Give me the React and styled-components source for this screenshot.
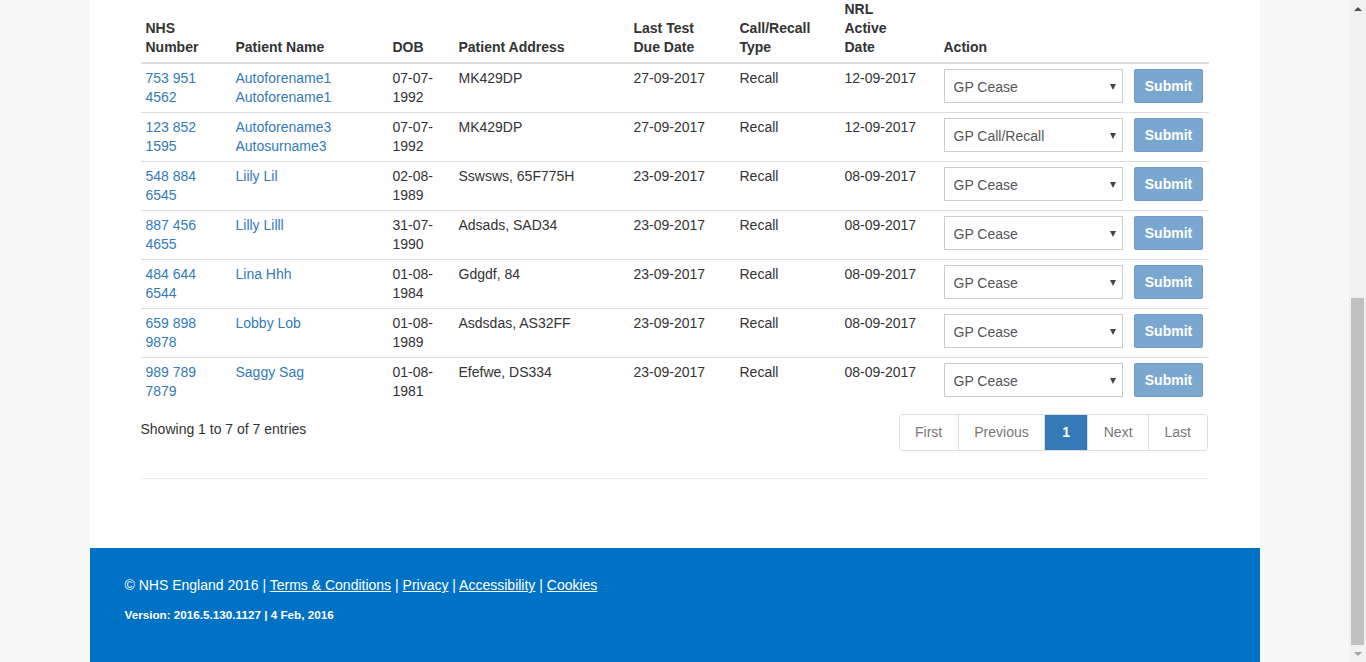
import React from "react";
import styled, { createGlobalStyle } from "styled-components";

const GlobalStyle = createGlobalStyle`
  html, body {
    margin: 0;
    padding: 0;
    overflow: hidden;
  }
  body {
    background: #f7f7f7;
    font-family: "Liberation Sans", Arial, sans-serif;
    font-size: 14px;
    color: #333;
  }
`;

const Shell = styled.div`
  display: flex;
  height: 662px;
  overflow: hidden;
`;

const Viewport = styled.div`
  flex: 1;
  overflow: hidden;
`;

const Container = styled.div`
  width: 1170px;
  margin: 0 auto;
  background: #fff;
`;

const Main = styled.div`
  padding: 0 51px;
  height: 548px;
  box-sizing: border-box;
`;

const Table = styled.table`
  width: 1068px;
  border-collapse: collapse;
  table-layout: fixed;
`;

const Th = styled.th`
  text-align: left;
  vertical-align: bottom;
  font-weight: bold;
  line-height: 19px;
  padding: 0 5px 5px;
  border-bottom: 2px solid #ddd;
`;

const Td = styled.td`
  vertical-align: top;
  line-height: 19px;
  padding: 5px;
  border-top: 1px solid #ddd;
  color: ${(p) => (p.$link ? "#337ab7" : "#333")};
`;

const ActionCell = styled.div`
  display: flex;
  gap: 11px;
`;

const SelectWrap = styled.div`
  position: relative;
  width: 179px;
  height: 34px;
`;

const Select = styled.select`
  appearance: none;
  width: 100%;
  height: 34px;
  box-sizing: border-box;
  border: 1px solid #ccc;
  border-radius: 0;
  background: #fff;
  padding: 0 9px;
  font-family: "Liberation Sans", Arial, sans-serif;
  font-size: 14px;
  color: #555;
  line-height: 34px;
`;

const Caret = styled.span`
  position: absolute;
  right: 7px;
  top: 15px;
  width: 0;
  height: 0;
  border-left: 3.5px solid transparent;
  border-right: 3.5px solid transparent;
  border-top: 6px solid #444;
  pointer-events: none;
`;

const SubmitButton = styled.button`
  width: 69px;
  height: 34px;
  border: 1px solid #6f9dc8;
  border-radius: 2px;
  background: #7aa7d0;
  color: #fff;
  font-family: "Liberation Sans", Arial, sans-serif;
  font-weight: bold;
  font-size: 14px;
  padding: 0 0 0 1px;
  cursor: not-allowed;
`;

const InfoRow = styled.div`
  display: flex;
  justify-content: space-between;
  align-items: flex-start;
  margin-top: 8px;
  padding-bottom: 27px;
  border-bottom: 1px solid #eee;
`;

const Info = styled.div`
  padding-top: 5px;
  line-height: 20px;
`;

const Pagination = styled.ul`
  display: flex;
  list-style: none;
  margin: 0 1px 0 0;
  padding: 0;
  border: 1px solid #ddd;
  border-radius: 4px;
  overflow: hidden;
`;

const PageItem = styled.li`
  padding: 8px ${(p) => (p.$active ? "15px" : "15.5px")};
  line-height: 19px;
  min-width: ${(p) => (p.$active ? "12px" : "auto")};
  text-align: center;
  color: ${(p) => (p.$active ? "#fff" : "#777")};
  background: ${(p) => (p.$active ? "#337ab7" : "#fff")};
  font-weight: ${(p) => (p.$active ? "bold" : "normal")};
  & + & {
    border-left: 1px solid #ddd;
  }
`;

const Footer = styled.footer`
  background: #0072c6;
  color: #fff;
  padding: 27px 35px 40px;
  height: 114px;
  box-sizing: border-box;
`;

const FooterLinks = styled.div`
  font-size: 14px;
  line-height: 20px;
`;

const FooterLink = styled.a`
  color: #fff;
  text-decoration: underline;
`;

const Version = styled.div`
  margin-top: 10px;
  font-size: 11.7px;
  font-weight: bold;
  line-height: 20px;
`;

const Scrollbar = styled.div`
  width: 17px;
  background: #f1f1f1;
  display: flex;
  flex-direction: column;
`;

const ArrowBox = styled.div`
  height: 17px;
  display: flex;
  align-items: center;
  justify-content: center;
`;

const Arrow = styled.span`
  width: 0;
  height: 0;
  border-left: 4px solid transparent;
  border-right: 4px solid transparent;
  ${(p) =>
    p.$up ? "border-bottom: 4px solid #505050;" : "border-top: 4px solid #a3a3a3;"}
`;

const Track = styled.div`
  flex: 1;
  display: flex;
  flex-direction: column;
  justify-content: flex-end;
  align-items: center;
`;

const Thumb = styled.div`
  width: 13px;
  height: 347px;
  background: #c1c1c1;
`;

const rows = [
  ["753 951 4562", "Autoforename1 Autoforename1", "07-07-1992", "MK429DP", "27-09-2017", "12-09-2017", "GP Cease"],
  ["123 852 1595", "Autoforename3 Autosurname3", "07-07-1992", "MK429DP", "27-09-2017", "12-09-2017", "GP Call/Recall"],
  ["548 884 6545", "Liily Lil", "02-08-1989", "Sswsws, 65F775H", "23-09-2017", "08-09-2017", "GP Cease"],
  ["887 456 4655", "Lilly Lilll", "31-07-1990", "Adsads, SAD34", "23-09-2017", "08-09-2017", "GP Cease"],
  ["484 644 6544", "Lina Hhh", "01-08-1984", "Gdgdf, 84", "23-09-2017", "08-09-2017", "GP Cease"],
  ["659 898 9878", "Lobby Lob", "01-08-1989", "Asdsdas, AS32FF", "23-09-2017", "08-09-2017", "GP Cease"],
  ["989 789 7879", "Saggy Sag", "01-08-1981", "Efefwe, DS334", "23-09-2017", "08-09-2017", "GP Cease"],
];

const splitDob = (dob) => (
  <>
    {dob.slice(0, 6)}
    <br />
    {dob.slice(6)}
  </>
);

const splitNhs = (nhs) => (
  <>
    {nhs.slice(0, 7)}
    <br />
    {nhs.slice(8)}
  </>
);

export default function App() {
  return (
    <>
      <GlobalStyle />
      <Shell>
        <Viewport>
          <Container>
            <Main>
              <Table>
                <colgroup>
                  <col style={{ width: 90 }} />
                  <col style={{ width: 157 }} />
                  <col style={{ width: 66 }} />
                  <col style={{ width: 175 }} />
                  <col style={{ width: 106 }} />
                  <col style={{ width: 105 }} />
                  <col style={{ width: 99 }} />
                  <col style={{ width: 270 }} />
                </colgroup>
                <thead>
                  <tr>
                    <Th>NHS<br />Number</Th>
                    <Th>Patient Name</Th>
                    <Th>DOB</Th>
                    <Th>Patient Address</Th>
                    <Th>Last Test<br />Due Date</Th>
                    <Th>Call/Recall<br />Type</Th>
                    <Th>NRL<br />Active<br />Date</Th>
                    <Th>Action</Th>
                  </tr>
                </thead>
                <tbody>
                  {rows.map((r) => (
                    <tr key={r[0]}>
                      <Td $link>{splitNhs(r[0])}</Td>
                      <Td $link>{r[1]}</Td>
                      <Td>{splitDob(r[2])}</Td>
                      <Td>{r[3]}</Td>
                      <Td>{r[4]}</Td>
                      <Td>Recall</Td>
                      <Td>{r[5]}</Td>
                      <Td>
                        <ActionCell>
                          <SelectWrap>
                            <Select defaultValue={r[6]}>
                              <option>GP Cease</option>
                              <option>GP Call/Recall</option>
                            </Select>
                            <Caret />
                          </SelectWrap>
                          <SubmitButton disabled>Submit</SubmitButton>
                        </ActionCell>
                      </Td>
                    </tr>
                  ))}
                </tbody>
              </Table>
              <InfoRow>
                <Info>Showing 1 to 7 of 7 entries</Info>
                <Pagination>
                  <PageItem>First</PageItem>
                  <PageItem>Previous</PageItem>
                  <PageItem $active>1</PageItem>
                  <PageItem>Next</PageItem>
                  <PageItem>Last</PageItem>
                </Pagination>
              </InfoRow>
            </Main>
            <Footer>
              <FooterLinks>
                © NHS England 2016 | <FooterLink href="#">Terms &amp; Conditions</FooterLink> |{" "}
                <FooterLink href="#">Privacy</FooterLink> |{" "}
                <FooterLink href="#">Accessibility</FooterLink> |{" "}
                <FooterLink href="#">Cookies</FooterLink>
              </FooterLinks>
              <Version>Version: 2016.5.130.1127 | 4 Feb, 2016</Version>
            </Footer>
          </Container>
        </Viewport>
        <Scrollbar>
          <ArrowBox>
            <Arrow $up />
          </ArrowBox>
          <Track>
            <Thumb />
          </Track>
          <ArrowBox>
            <Arrow />
          </ArrowBox>
        </Scrollbar>
      </Shell>
    </>
  );
}
